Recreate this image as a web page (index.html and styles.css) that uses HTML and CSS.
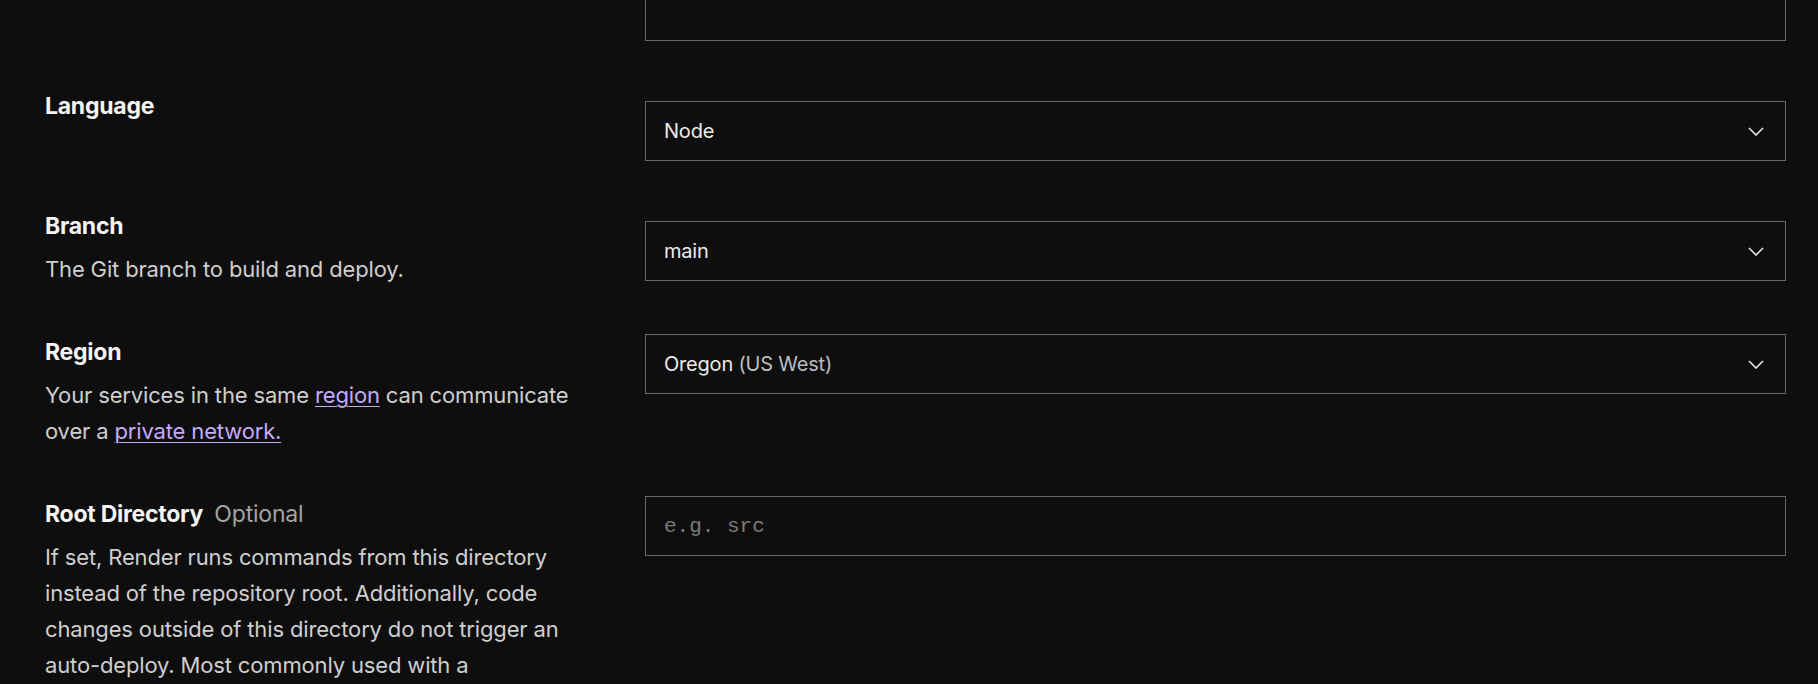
FILE: index.html
```html
<!DOCTYPE html>
<html lang="en">
<head>
<meta charset="utf-8">
<title>Service settings</title>
<link rel="stylesheet" href="styles.css">
</head>
<body>
<div class="form">
  <div class="row row-top">
    <div class="info"></div>
    <div class="field"><div class="box"></div></div>
  </div>

  <div class="row">
    <div class="info">
      <div class="label">Language</div>
    </div>
    <div class="field field-offset">
      <div class="box select">
        <span class="value">Node</span>
        <svg class="chev" viewBox="0 0 16 9" width="16" height="9"><path d="M1 1l7 7 7-7" fill="none" stroke="#e8e8e8" stroke-width="1.6"/></svg>
      </div>
    </div>
  </div>

  <div class="row">
    <div class="info">
      <div class="label">Branch</div>
      <p class="desc">The Git branch to build and deploy.</p>
    </div>
    <div class="field field-offset">
      <div class="box select">
        <span class="value">main</span>
        <svg class="chev" viewBox="0 0 16 9" width="16" height="9"><path d="M1 1l7 7 7-7" fill="none" stroke="#e8e8e8" stroke-width="1.6"/></svg>
      </div>
    </div>
  </div>

  <div class="row">
    <div class="info">
      <div class="label">Region</div>
      <p class="desc">Your services in the same <a href="#">region</a> can communicate over a <a href="#">private network.</a></p>
    </div>
    <div class="field">
      <div class="box select">
        <span class="value">Oregon <span class="muted">(US West)</span></span>
        <svg class="chev" viewBox="0 0 16 9" width="16" height="9"><path d="M1 1l7 7 7-7" fill="none" stroke="#e8e8e8" stroke-width="1.6"/></svg>
      </div>
    </div>
  </div>

  <div class="row">
    <div class="info">
      <div class="label">Root Directory <span class="optional">Optional</span></div>
      <p class="desc">If set, Render runs commands from this directory instead of the repository root. Additionally, code changes outside of this directory do not trigger an auto-deploy. Most commonly used with a monorepo.</p>
    </div>
    <div class="field">
      <div class="box input"><span class="placeholder">e.g. src</span></div>
    </div>
  </div>
</div>
</body>
</html>
```
FILE: styles.css
```css
html, body {
  margin: 0;
  padding: 0;
  background: #0e0e0e;
  height: 100%;
  overflow: hidden;
}

body {
  font-family: Inter, "Noto Sans", "Liberation Sans", sans-serif;
  color: #ededed;
}

.form {
  display: flex;
  flex-direction: column;
  gap: 47px;
  padding: 0 32px 0 45px;
  margin-top: -19px;
}

.row {
  display: grid;
  grid-template-columns: 535px 1fr;
  column-gap: 65px;
  align-items: start;
}

.label {
  font-size: 23px;
  line-height: 36px;
  font-weight: 700;
  letter-spacing: -0.25px;
  color: #f4f4f4;
}

.optional {
  font-weight: 400;
  color: #a3a3a3;
  margin-left: 6px;
  letter-spacing: -0.2px;
}

.desc {
  margin: 7px 0 0;
  font-size: 22px;
  line-height: 36px;
  letter-spacing: -0.15px;
  color: #cfcfcf;
}

.desc a {
  color: #c6abfa;
  text-decoration: underline;
  text-underline-offset: 3px;
  text-decoration-thickness: 1px;
}

.field-offset {
  margin-top: 13px;
}

.box {
  height: 60px;
  box-sizing: border-box;
  border: 1px solid #676767;
  display: flex;
  align-items: center;
  justify-content: space-between;
  padding: 0 21px 0 18px;
}

.value {
  font-size: 20px;
  color: #ececec;
  letter-spacing: -0.2px;
}

.muted {
  color: #bdbdbd;
}

.chev {
  display: block;
}

.placeholder {
  font-family: "Liberation Mono", "DejaVu Sans Mono", monospace;
  font-size: 21px;
  color: #7a7a7a;
}
```
